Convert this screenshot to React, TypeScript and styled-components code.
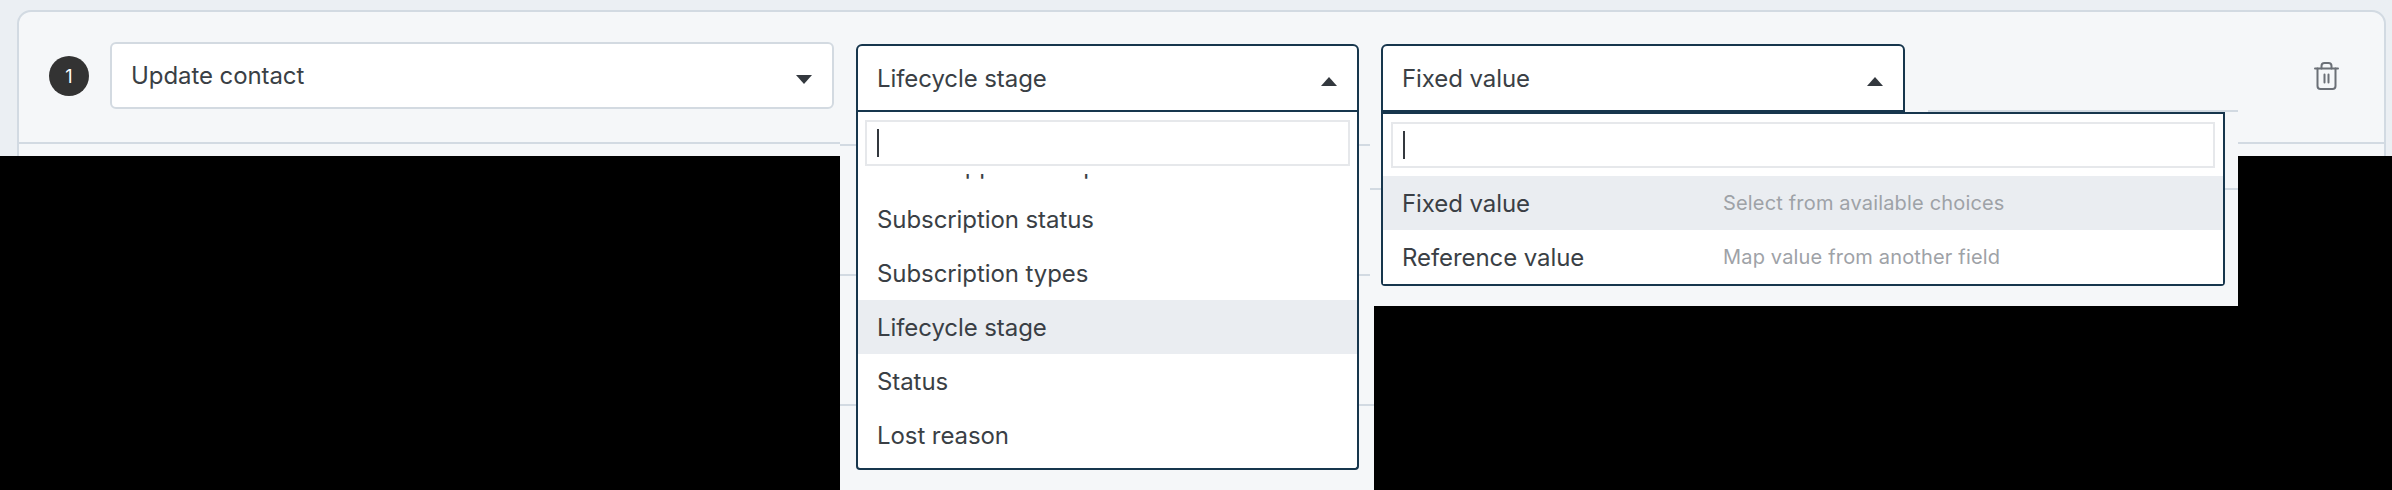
import React from "react";
import styled, { createGlobalStyle } from "styled-components";

const Global = createGlobalStyle`
  html, body { margin: 0; padding: 0; background: #ebeff3; }
  body { font-family: Inter, "Noto Sans", "Liberation Sans", sans-serif; color: #3a3f45; }
`;

const Page = styled.div`
  position: relative;
  width: 2392px;
  height: 490px;
  overflow: hidden;
  padding: 10px 6px 0 17px;
  box-sizing: border-box;
`;

const Card = styled.section`
  height: 640px;
  box-sizing: border-box;
  background: #f5f7f9;
  border: 2px solid #d2dae2;
  border-radius: 14px;
`;

const Row = styled.div`
  position: relative;
  z-index: 2;
  display: flex;
  align-items: flex-start;
  padding: 30px 45px 0 30px;
`;

const Badge = styled.span`
  flex: none;
  width: 40px;
  height: 40px;
  margin: 14px 21px 0 0;
  border-radius: 50%;
  background: #333333;
  color: #ffffff;
  font-size: 18px;
  display: flex;
  align-items: center;
  justify-content: center;
`;

const Field = styled.div<{ $width: number; $open?: boolean }>`
  position: relative;
  flex: none;
  width: ${(p) => p.$width}px;
  margin: ${(p) => (p.$open ? "2px 22px 0 0" : "0 22px 0 0")};
`;

const Control = styled.div<{ $open?: boolean }>`
  box-sizing: border-box;
  height: ${(p) => (p.$open ? 68 : 67)}px;
  padding: 0 20px 0 19px;
  display: flex;
  align-items: center;
  justify-content: space-between;
  background: #fff;
  border: 2px solid ${(p) => (p.$open ? "#17364d" : "#d3dae1")};
  border-radius: ${(p) => (p.$open ? "6px 6px 0 0" : "6px")};
  font-size: 24px;
  letter-spacing: -0.08px;
`;

const Arrow = styled.i<{ $up?: boolean }>`
  flex: none;
  width: 0;
  height: 0;
  margin-top: 7px;
  border-left: 8px solid transparent;
  border-right: 8px solid transparent;
  ${(p) => (p.$up ? "border-bottom: 9px solid #33383e;" : "border-top: 9px solid #33383e;")}
`;

const Menu = styled.div<{ $width: number; $flush?: boolean }>`
  position: absolute;
  left: 0;
  top: 100%;
  width: ${(p) => p.$width}px;
  box-sizing: border-box;
  background: #fff;
  border: 2px solid #17364d;
  border-top-width: ${(p) => (p.$flush ? 0 : 2)}px;
  border-radius: 0 0 4px 4px;
`;

const Search = styled.div<{ $inset: number }>`
  height: 46px;
  box-sizing: border-box;
  margin: 8px ${(p) => p.$inset}px 0;
  padding: 0 10px;
  display: flex;
  align-items: center;
  border: 2px solid #e6e8eb;
`;

const TextCaret = styled.span`
  width: 2px;
  height: 28px;
  background: #33383e;
`;

const List = styled.div<{ $height: number; $top: number; $offset: number }>`
  height: ${(p) => p.$height}px;
  margin-top: ${(p) => p.$top}px;
  overflow: hidden;
  & > :first-child {
    margin-top: ${(p) => p.$offset}px;
  }
`;

const Option = styled.div<{ $active?: boolean }>`
  height: 54px;
  padding: 0 19px;
  display: flex;
  align-items: center;
  background: ${(p) => (p.$active ? "#eaedf1" : "#fff")};
  font-size: 24px;
  letter-spacing: -0.08px;
`;

const OptionLabel = styled.span`
  flex: none;
  width: 321px;
`;

const OptionHint = styled.span`
  font-size: 20px;
  color: #9ea2a7;
  letter-spacing: 0.17px;
`;

const TrashButton = styled.button`
  flex: none;
  margin: 20px 0 0 auto;
  padding: 0;
  border: 0;
  background: none;
  display: flex;
  color: #6b7077;
`;

const Rule = styled.div<{ $x: number; $y: number; $w: number }>`
  position: absolute;
  z-index: 1;
  left: ${(p) => p.$x}px;
  top: ${(p) => p.$y}px;
  width: ${(p) => p.$w}px;
  height: 2px;
  background: #d2dae2;
`;

const Redaction = styled.div<{ $x: number; $y: number; $w: number; $h: number }>`
  position: absolute;
  z-index: 5;
  left: ${(p) => p.$x}px;
  top: ${(p) => p.$y}px;
  width: ${(p) => p.$w}px;
  height: ${(p) => p.$h}px;
  background: #000;
`;

const rules = [
  { x: 19, y: 142, w: 821 },
  { x: 2238, y: 142, w: 148 },
  { x: 840, y: 144, w: 530 },
  { x: 840, y: 274, w: 530 },
  { x: 840, y: 404, w: 534 },
  { x: 1370, y: 188, w: 868 },
  { x: 1928, y: 110, w: 310 },
];

const masks = [
  { x: 0, y: 156, w: 840, h: 334 },
  { x: 2238, y: 156, w: 154, h: 150 },
  { x: 1374, y: 306, w: 1018, h: 184 },
];

const fields = [
  "WhatsApp subscription status",
  "Subscription status",
  "Subscription types",
  "Lifecycle stage",
  "Status",
  "Lost reason",
];

const choices = [
  { label: "Fixed value", hint: "Select from available choices" },
  { label: "Reference value", hint: "Map value from another field" },
];

const Trash = () => (
  <svg width="25" height="28" viewBox="0 0 25 28" fill="none" stroke="currentColor" strokeWidth="2" strokeLinecap="round" strokeLinejoin="round">
    <path d="M1 6.5h23" />
    <path d="M3.5 6.5V24a3 3 0 0 0 3 3h12a3 3 0 0 0 3-3V6.5" />
    <path d="M7.5 6.5V4a3 3 0 0 1 3-3h4a3 3 0 0 1 3 3v2.5" />
    <path d="M10.5 12.5v8M14.5 12.5v8" />
  </svg>
);

export default function App() {
  return (
    <Page>
      <Global />
      <Card>
        <Row>
          <Badge>1</Badge>
          <Field $width={724}>
            <Control>
              Update contact
              <Arrow />
            </Control>
          </Field>
          <Field $width={503} $open>
            <Control $open>
              Lifecycle stage
              <Arrow $up />
            </Control>
            <Menu $width={503} $flush>
              <Search $inset={7}>
                <TextCaret />
              </Search>
              <List $height={294} $top={8} $offset={-36}>
                {fields.map((f) => (
                  <Option key={f} $active={f === "Lifecycle stage"}>
                    {f}
                  </Option>
                ))}
              </List>
            </Menu>
          </Field>
          <Field $width={524} $open>
            <Control $open>
              Fixed value
              <Arrow $up />
            </Control>
            <Menu $width={844}>
              <Search $inset={8}>
                <TextCaret />
              </Search>
              <List $height={108} $top={8} $offset={0}>
                {choices.map((c, i) => (
                  <Option key={c.label} $active={i === 0}>
                    <OptionLabel>{c.label}</OptionLabel>
                    <OptionHint>{c.hint}</OptionHint>
                  </Option>
                ))}
              </List>
            </Menu>
          </Field>
          <TrashButton aria-label="Delete">
            <Trash />
          </TrashButton>
        </Row>
      </Card>
      {rules.map((r) => (
        <Rule key={`${r.x}-${r.y}`} $x={r.x} $y={r.y} $w={r.w} />
      ))}
      {masks.map((m) => (
        <Redaction key={m.x} $x={m.x} $y={m.y} $w={m.w} $h={m.h} />
      ))}
    </Page>
  );
}
